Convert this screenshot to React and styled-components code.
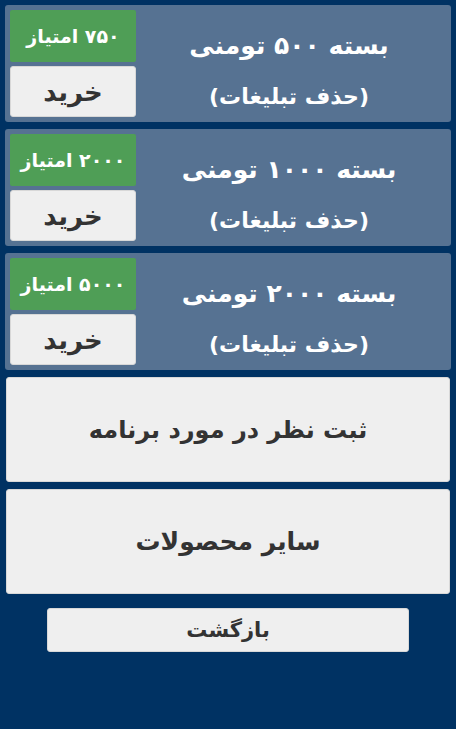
import styled, { createGlobalStyle } from "styled-components";

const GlobalStyle = createGlobalStyle`
  html, body {
    margin: 0;
    padding: 0;
    background: #003263;
  }
  body {
    font-family: "DejaVu Sans", "Noto Sans", sans-serif;
  }
`;

const Page = styled.div`
  direction: rtl;
  min-height: 729px;
  padding: 5px 5px 0;
  box-sizing: border-box;
  display: flex;
  flex-direction: column;
  gap: 7px;
  background: #003263;
`;

const PackCard = styled.div`
  display: flex;
  height: 117px;
  box-sizing: border-box;
  padding: 5px;
  background: #567292;
  border-radius: 3px;
`;

const PackTitle = styled.div`
  flex: 1;
  display: flex;
  flex-direction: column;
  align-items: center;
  justify-content: center;
  gap: 26px;
  color: #fff;
  font-weight: bold;
  padding: 14px 4px 0 0;
`;

const TitleLine = styled.div`
  font-size: ${(p) => p.$size}px;
  line-height: 1.1;
`;

const Side = styled.div`
  width: 126px;
  display: flex;
  flex-direction: column;
  gap: 4px;
`;

const Points = styled.div`
  height: 52px;
  display: flex;
  align-items: center;
  justify-content: center;
  background: #4f9e56;
  color: #fff;
  font-weight: bold;
  font-size: 19px;
  border-radius: 2px;
`;

const Button = styled.button`
  display: flex;
  align-items: center;
  justify-content: center;
  background: #efefef;
  border: 1px solid #d8d8d8;
  border-radius: 3px;
  color: #333;
  font-family: inherit;
  font-weight: bold;
  font-size: ${(p) => p.$size || 25}px;
  height: ${(p) => p.$height}px;
  padding: 0;
  box-sizing: border-box;
  cursor: pointer;
`;

const BigButton = styled(Button)`
  margin: 0 1px;
  height: 105px;
`;

const BackRow = styled.div`
  display: flex;
  justify-content: center;
  margin-top: 7px;
`;

const BackButton = styled(Button)`
  width: 362px;
  height: 44px;
`;

const packs = [
  { title: "بسته ۵۰۰ تومنی", points: "۷۵۰ امتیاز" },
  { title: "بسته ۱۰۰۰ تومنی", points: "۲۰۰۰ امتیاز" },
  { title: "بسته ۲۰۰۰ تومنی", points: "۵۰۰۰ امتیاز" },
];

export default function App() {
  return (
    <>
      <GlobalStyle />
      <Page>
        {packs.map((p) => (
          <PackCard key={p.title}>
            <PackTitle>
              <TitleLine $size={25}>{p.title}</TitleLine>
              <TitleLine $size={22}>(حذف تبلیغات)</TitleLine>
            </PackTitle>
            <Side>
              <Points>{p.points}</Points>
              <Button $height={51} $size={26}>خرید</Button>
            </Side>
          </PackCard>
        ))}
        <BigButton $size={24}>ثبت نظر در مورد برنامه</BigButton>
        <BigButton>سایر محصولات</BigButton>
        <BackRow>
          <BackButton $size={21}>بازگشت</BackButton>
        </BackRow>
      </Page>
    </>
  );
}
